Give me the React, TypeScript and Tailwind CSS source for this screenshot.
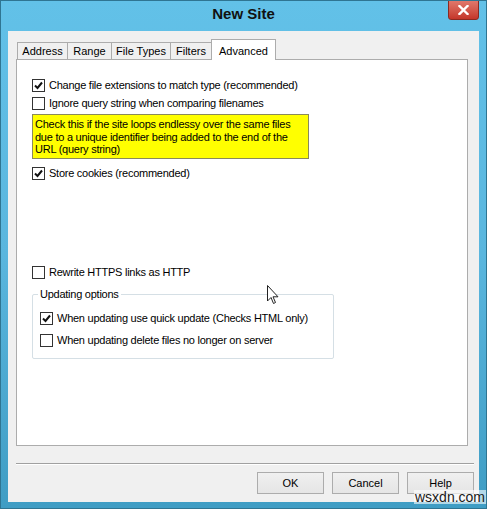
import React from "react";

const font = { fontFamily: '"Liberation Sans", Arial, sans-serif' };

function Check({ checked }: { checked?: boolean }) {
  return (
    <div className="w-[13px] h-[13px] border border-[#333333] bg-white flex items-center justify-center shrink-0">
      {checked && (
        <svg width="9" height="9" viewBox="0 0 9 9">
          <path d="M1 4.5 L3.5 7 L8 1.5" fill="none" stroke="#111" strokeWidth="2" />
        </svg>
      )}
    </div>
  );
}

function Row({ checked, label, className = "" }: { checked?: boolean; label: string; className?: string }) {
  return (
    <div className={"flex items-center gap-[4px] h-[15px] " + className}>
      <Check checked={checked} />
      <span className="text-[11px] tracking-[-0.25px] text-black leading-none whitespace-nowrap">{label}</span>
    </div>
  );
}

function Tab({ label, w, active }: { label: string; w: string; active?: boolean }) {
  return active ? (
    <div className={`${w} h-[21px] bg-white border border-[#acacac] border-b-0 -mb-px relative z-10 flex items-start justify-center pt-[3px] text-[11px] text-black`}>
      {label}
    </div>
  ) : (
    <div className={`${w} h-[17px] bg-[#f0f0f0] border border-[#acacac] border-b-0 -ml-px first:ml-0 flex items-center justify-center text-[11px] text-black`}>
      {label}
    </div>
  );
}

export default function App() {
  return (
    <div style={font} className="w-[487px] h-[509px] relative bg-gradient-to-b from-[#62c1e8] via-[#5ab6de] to-[#3f9dc4] border border-[#2f7592] flex flex-col overflow-hidden">
      {/* title bar */}
      <div className="h-[30px] shrink-0 relative flex items-start justify-center pt-[5px]">
        <span className="text-[15px] font-bold text-[#111] leading-none">New Site</span>
        <div className="absolute right-[7px] top-[-1px] w-[31px] h-[20px] bg-gradient-to-b from-[#e0776b] to-[#c4352a] border border-[#8a2a22] rounded-b-[3px] flex items-center justify-center">
          <svg width="11" height="10" viewBox="0 0 11 10">
            <path d="M1.5 1 L9.5 9 M9.5 1 L1.5 9" stroke="white" strokeWidth="2.4" strokeLinecap="square" />
          </svg>
        </div>
      </div>
      {/* client */}
      <div className="mx-[7px] h-[471px] bg-[#f0f0f0] flex flex-col pl-[8px] pt-[8px]">
        {/* tabs */}
        <div className="flex items-end h-[20px] pl-[1px]">
          <Tab label="Address" w="w-[51px]" />
          <Tab label="Range" w="w-[45px]" />
          <Tab label="File Types" w="w-[60px]" />
          <Tab label="Filters" w="w-[42px]" />
          <div className="-ml-px">
            <Tab label="Advanced" w="w-[65px]" active />
          </div>
        </div>
        {/* panel */}
        <div className="w-[452px] h-[387px] bg-white border border-[#acacac] relative">
          <div className="flex flex-col pl-[15px] pt-[18px]">
            <Row checked label="Change file extensions to match type (recommended)" />
            <Row label="Ignore query string when comparing filenames" className="mt-[3px]" />
            <div className="mt-[3px] w-[277px] h-[45px] bg-[#ffff00] border border-[#8a8a5a] px-[2px] pt-[3px] text-[11px] tracking-[-0.25px] leading-[12.5px] text-black">
              Check this if the site loops endlessy over the same files due to a unique identifier being added to the end of the URL (query string)
            </div>
            <Row checked label="Store cookies (recommended)" className="mt-[7px]" />
            <Row label="Rewrite HTTPS links as HTTP" className="mt-[84px]" />
            <div className="mt-[14px] w-[302px] h-[65px] border border-[#d5dfe5] rounded-[2px] relative pl-[7px] pt-[16px]">
              <span className="absolute left-[5px] top-[-8px] bg-white px-[2px] text-[11px] tracking-[-0.25px] leading-[14px] text-black">
                Updating options
              </span>
              <Row checked label="When updating use quick update (Checks HTML only)" />
              <Row label="When updating delete files no longer on server" className="mt-[7px]" />
            </div>
          </div>
        </div>
        {/* separator */}
        <div className="w-[458px] h-[2px] border-t border-[#a0a0a0] border-b border-b-white mt-[17px]" />
        {/* buttons */}
        <div className="flex justify-end gap-[8px] w-[458px] mt-[7px]">
          {["OK", "Cancel", "Help"].map((b) => (
            <div
              key={b}
              className="w-[67px] h-[22px] border border-[#acacac] bg-gradient-to-b from-[#f0f0f0] to-[#e5e5e5] flex items-center justify-center text-[11px] text-black"
            >
              {b}
            </div>
          ))}
        </div>
      </div>
      {/* watermark */}
      <div className="absolute left-[413px] top-[489px] text-[14px] leading-none text-[#1a1a1a] bg-white/60 px-[1px]">wsxdn.com</div>
      {/* cursor */}
      <svg className="absolute left-[266px] top-[284px]" width="13" height="20" viewBox="0 0 13 20">
        <path d="M0.5 0.5 L0.5 16 L4 12.5 L6.5 18.5 L8.5 17.5 L6 11.8 L11 11.8 Z" fill="white" stroke="#222" strokeWidth="1" strokeLinejoin="miter" />
      </svg>
    </div>
  );
}
